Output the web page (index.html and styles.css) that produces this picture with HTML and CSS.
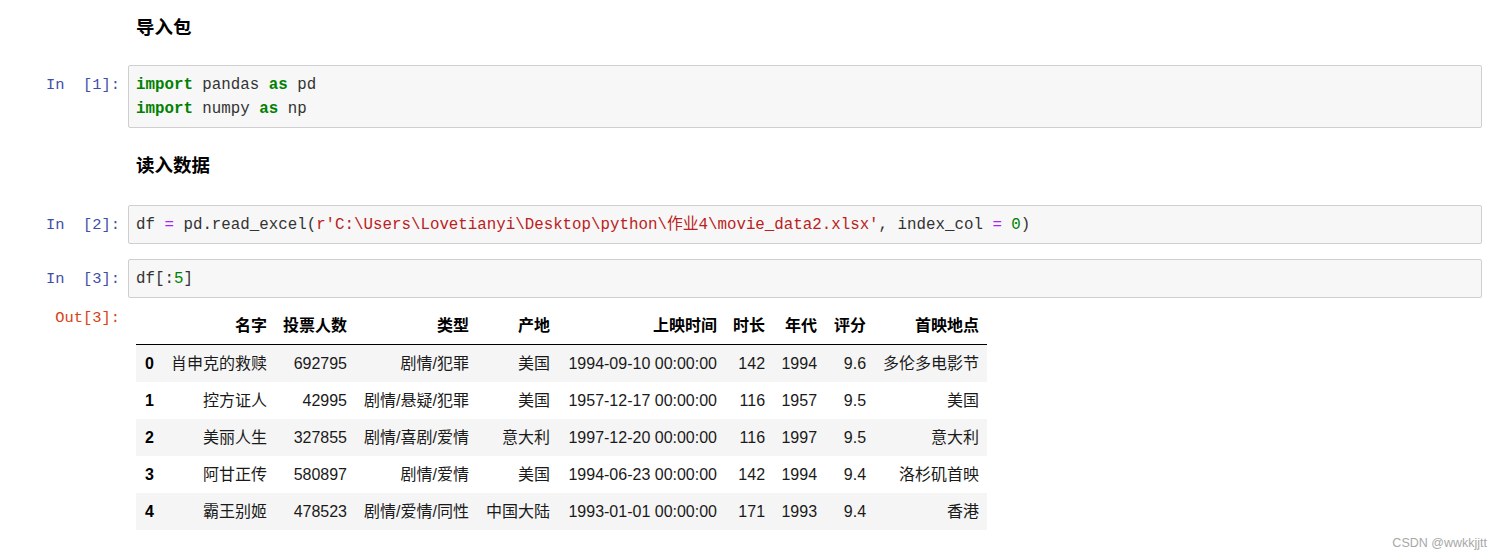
FILE: index.html
```html
<!DOCTYPE html>
<html lang="zh">
<head>
<meta charset="utf-8">
<title>Notebook</title>
<link rel="stylesheet" href="styles.css">
</head>
<body>
<div class="nb">
  <div class="row md md-first">
    <div class="prompt"></div>
    <div class="md-body"><h4>导入包</h4></div>
  </div>

  <div class="row code-row gap-a">
    <div class="prompt in">In&nbsp;&nbsp;[1]:</div>
    <div class="cell"><pre><span class="kw">import</span> pandas <span class="kw">as</span> pd
<span class="kw">import</span> numpy <span class="kw">as</span> np</pre></div>
  </div>

  <div class="row md md-second">
    <div class="prompt"></div>
    <div class="md-body"><h4>读入数据</h4></div>
  </div>

  <div class="row code-row gap-b">
    <div class="prompt in">In&nbsp;&nbsp;[2]:</div>
    <div class="cell"><pre>df <span class="op">=</span> pd.read_excel(<span class="str">r'C:\Users\Lovetianyi\Desktop\python\作业4\movie_data2.xlsx'</span>, index_col <span class="op">=</span> <span class="num">0</span>)</pre></div>
  </div>

  <div class="row code-row gap-c">
    <div class="prompt in">In&nbsp;&nbsp;[3]:</div>
    <div class="cell"><pre>df[:<span class="num">5</span>]</pre></div>
  </div>

  <div class="row out-row">
    <div class="prompt out">Out[3]:</div>
    <div class="output">
      <table class="df">
        <thead>
          <tr><th class="c-idx"></th><th class="c-name">名字</th><th class="c-votes">投票人数</th><th class="c-type">类型</th><th class="c-origin">产地</th><th class="c-date">上映时间</th><th class="c-len">时长</th><th class="c-year">年代</th><th class="c-score">评分</th><th class="c-place">首映地点</th></tr>
        </thead>
        <tbody>
          <tr><th>0</th><td>肖申克的救赎</td><td>692795</td><td>剧情/犯罪</td><td>美国</td><td>1994-09-10 00:00:00</td><td>142</td><td>1994</td><td>9.6</td><td>多伦多电影节</td></tr>
          <tr><th>1</th><td>控方证人</td><td>42995</td><td>剧情/悬疑/犯罪</td><td>美国</td><td>1957-12-17 00:00:00</td><td>116</td><td>1957</td><td>9.5</td><td>美国</td></tr>
          <tr><th>2</th><td>美丽人生</td><td>327855</td><td>剧情/喜剧/爱情</td><td>意大利</td><td>1997-12-20 00:00:00</td><td>116</td><td>1997</td><td>9.5</td><td>意大利</td></tr>
          <tr><th>3</th><td>阿甘正传</td><td>580897</td><td>剧情/爱情</td><td>美国</td><td>1994-06-23 00:00:00</td><td>142</td><td>1994</td><td>9.4</td><td>洛杉矶首映</td></tr>
          <tr><th>4</th><td>霸王别姬</td><td>478523</td><td>剧情/爱情/同性</td><td>中国大陆</td><td>1993-01-01 00:00:00</td><td>171</td><td>1993</td><td>9.4</td><td>香港</td></tr>
        </tbody>
      </table>
    </div>
  </div>
</div>
<div class="watermark">CSDN @wwkkjjtt</div>
</body>
</html>
```

FILE: styles.css
```css
html, body {
  margin: 0;
  padding: 0;
  background: #ffffff;
}

body {
  width: 1503px;
  height: 560px;
  overflow: hidden;
  position: relative;
  font-family: "Liberation Sans", "Noto Sans CJK SC", sans-serif;
  color: #000;
}

.nb {
  padding-right: 21px;
}

.row {
  display: flex;
  gap: 8px;
  align-items: flex-start;
}

.prompt {
  width: 120px;
  flex: 0 0 120px;
  text-align: right;
  font-family: "Liberation Mono", "Noto Sans CJK SC", monospace;
  font-size: 15.4px;
  line-height: 24px;
  white-space: nowrap;
}

.prompt.in {
  color: #3f4fa8;
  padding-top: 7.5px;
}

.prompt.out {
  color: #d84315;
  line-height: 22px;
  padding-top: 1px;
}

/* markdown cells */
.md-body {
  padding-left: 8px;
}

.md h4 {
  margin: 0;
  font-size: 18.5px;
  line-height: 26px;
  font-weight: bold;
  font-family: "Liberation Sans", "Noto Sans CJK SC", sans-serif;
  color: #000;
}

.md-first { padding-top: 15px; }
.md-second { padding-top: 25px; }

.gap-a { margin-top: 24px; }
.gap-b { margin-top: 26px; }
.gap-c { margin-top: 15px; }

/* code cells */
.cell {
  flex: 1 1 auto;
  min-width: 0;
  background: #f7f7f7;
  border: 1px solid #cfcfcf;
  border-radius: 2px;
  padding: 6.5px 7px;
}

.cell pre {
  margin: 0;
  font-family: "Liberation Mono", "Noto Sans CJK SC", monospace;
  font-size: 15.8px;
  line-height: 24px;
  color: #333;
  white-space: pre;
}

.kw { color: #008000; font-weight: bold; }
.op { color: #aa22ff; }
.str { color: #ba2121; }
.num { color: #008000; }

/* output */
.out-row {
  margin-top: 8px;
}

.output {
  padding-left: 8px;
  padding-top: 1px;
}

table.df {
  border-collapse: collapse;
  border-spacing: 0;
  border: none;
  font-size: 16px;
  color: #000;
}

table.df th,
table.df td {
  text-align: right;
  vertical-align: middle;
  padding: 8px 8px;
  line-height: 21px;
  white-space: nowrap;
  border: none;
}

table.df td {
  font-weight: normal;
  color: #1a1a1a;
}

table.df th {
  font-weight: bold;
}

table.df thead {
  border-bottom: 1px solid #000;
}

table.df tbody tr:nth-child(odd) {
  background: #f5f5f5;
}

/* column widths (content box) */
.c-idx { width: 10px; }
.c-name { width: 97px; }
.c-votes { width: 64px; }
.c-type { width: 106px; }
.c-origin { width: 65px; }
.c-date { width: 151px; }
.c-len { width: 32px; }
.c-year { width: 36px; }
.c-score { width: 33px; }
.c-place { width: 97px; }

.watermark {
  position: absolute;
  right: 16px;
  bottom: 9px;
  font-size: 12.5px;
  line-height: 15px;
  color: #a8a8a8;
  font-family: "Liberation Sans", sans-serif;
}
```
